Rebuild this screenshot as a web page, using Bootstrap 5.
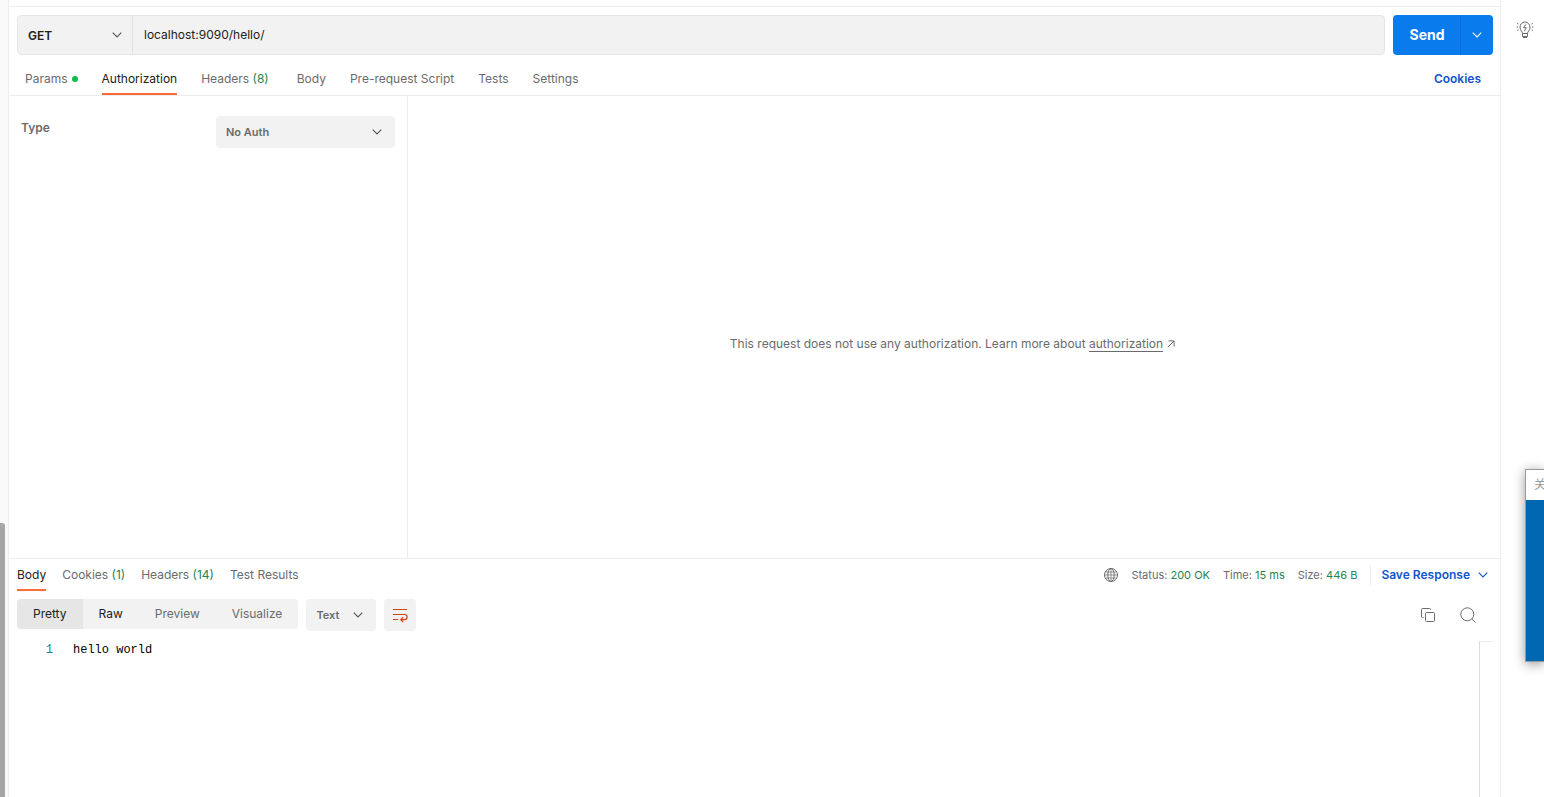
<!DOCTYPE html>
<html lang="en">
<head>
<meta charset="utf-8">
<meta name="viewport" content="width=device-width, initial-scale=1">
<title>localhost:9090/hello/</title>
<link href="https://cdn.jsdelivr.net/npm/bootstrap@5.3.0/dist/css/bootstrap.min.css" rel="stylesheet">
<style>
  :root {
    --line: #ededed;
    --fill: #f2f2f2;
    --muted: #6b6b6b;
    --ink: #212121;
    --link: #1055cc;
    --ok: #26834f;
    --accent: #ff6c37;
  }
  body { font-family: Inter, "Noto Sans CJK SC", sans-serif; font-size: 12px; line-height: 16px; color: var(--muted); background: #fff; overflow: hidden; }
  svg { display: block; flex: none; fill: none; stroke: currentColor; }
  .gutter { width: 9px; background: #f9f9f9; border-right: 1px solid var(--line); }
  .gutter-thumb { width: 5px; height: 274px; background: #a6a6a6; border-radius: 0 3px 0 0; }
  .rail { width: 44px; border-left: 1px solid var(--line); padding-top: 21px; }
  .top-edge { height: 7px; border-bottom: 1px solid var(--line); }
  .rule-b { border-bottom: 1px solid var(--line); }
  .rule-r { border-right: 1px solid var(--line); }

  .request-form { padding: 8px 7px 0 8px; }
  .url-bar { height: 40px; background: var(--fill); border: 1px solid #e6e6e6; border-radius: 4px; }
  .picker { background-color: var(--fill); background-size: 10px 6px; border: 0; border-radius: 4px; font-size: 11px; font-weight: 600; line-height: 16px; color: var(--muted);
    background-image: url("data:image/svg+xml,%3Csvg xmlns='http://www.w3.org/2000/svg' viewBox='0 0 10 6' fill='none' stroke='%23555' stroke-width='1.1'%3E%3Cpath d='M.7 .7L5 5 9.3 .7'/%3E%3C/svg%3E"); }
  .picker-method { flex: none; width: 114px; font-size: 12px; color: var(--ink); padding: 1px 24px 0 10px; background-position: right 10px center; }
  .picker-auth { width: 179px; height: 32px; padding: 0 24px 0 10px; background-position: right 13px center; }
  .picker-lang { width: 70px; height: 32px; padding: 0 20px 0 10px; background-position: right 13px center; }
  .url-input { font-size: 12px; color: var(--ink); border: 0; border-left: 1px solid #e0e0e0; border-radius: 0; background: none; padding: 0 11px; }
  .send { --bs-btn-bg: #097bed; --bs-btn-border-color: #097bed; --bs-btn-hover-bg: #0a6fd4; --bs-btn-color: #fff; --bs-btn-hover-color: #fff; --bs-btn-border-radius: 4px; border: 0; font-size: 14px; font-weight: 700; line-height: 20px; padding: 0; }
  .send-main { width: 68px; }
  .send-more { width: 33px; border-left: 1px solid #0a6ed6; }

  .tab { color: var(--muted); background: none; border: 0; border-bottom: 2px solid transparent; padding: 2px 0 0; font-size: 12px; line-height: 16px; white-space: nowrap; }
  .tab.active { color: var(--ink); border-color: var(--accent); }
  .request-tabs { height: 40px; }
  .request-tabs .tab { padding-top: 10px; }
  .response-tabs { height: 32px; }
  .count { color: var(--ok); }
  .dot { width: 6px; height: 6px; background: #0cbb52; }
  .act { color: var(--link); font-weight: 600; text-decoration: none; font-size: 12px; line-height: 16px; border: 0; background: none; padding: 0; }
  .cookies { margin-right: 19px; }

  .auth-side { width: 399px; padding: 20px 12px; }
  .type-label { font-weight: 600; padding-top: 4px; }
  .auth-note { padding: 34px 3px 0 0; }
  .learn { color: inherit; text-decoration: none; border-bottom: 1px solid currentColor; }

  .response { height: 238px; }
  .meta { font-size: 11px; gap: 13px; }
  .save { border-left: 1px solid var(--line); height: 20px; padding-left: 10px; }
  .views { background: var(--fill); border-radius: 4px; height: 30px; overflow: hidden; }
  .views button { border: 0; background: none; padding: 0 16px; color: var(--muted); font-size: 12px; }
  .views .dark { color: var(--ink); }
  .views .active { background: #e6e6e6; }
  .wrap-btn { width: 32px; height: 32px; border: 0; border-radius: 4px; background: var(--fill); color: #d2430f; }
  .tool { border: 0; background: none; padding: 0; color: var(--muted); }
  .editor { padding: 10px 7px 0 0; }
  .code { font-family: "Liberation Mono", monospace; font-size: 12px; line-height: 18px; color: #000; }
  .line-no { width: 44px; color: #237893; text-align: right; }
  .minimap { width: 14px; border-left: 1px solid #dcdcdc; border-top: 1px solid var(--line); }

  .peek { position: fixed; right: 0; bottom: 135px; width: 19px; height: 193px; border: 1px solid #999; border-right: 0; background: #0067b3; box-shadow: 0 2px 12px rgba(0,0,0,.4); overflow: hidden; }
  .peek-title { height: 30px; background: #fff; color: #999; padding: 6px 0 0 8px; white-space: nowrap; line-height: 18px; }
</style>
</head>
<body class="d-flex vh-100">
  <aside class="gutter d-flex flex-column justify-content-end flex-shrink-0"><div class="gutter-thumb"></div></aside>

  <main class="d-flex flex-column flex-grow-1">
    <div class="top-edge"></div>

    <form class="request-form d-flex gap-2" onsubmit="return false">
      <div class="url-bar d-flex flex-grow-1">
        <select class="form-select picker picker-method" aria-label="Method"><option>GET</option><option>POST</option></select>
        <input class="form-control url-input" type="text" aria-label="Request URL" value="localhost:9090/hello/">
      </div>
      <div class="btn-group">
        <button class="btn send send-main" type="submit">Send</button>
        <button class="btn send send-more d-flex align-items-center justify-content-center" type="button" aria-label="Send options"><svg width="10" height="6"><path d="M.7 .7L5 5 9.3 .7" stroke-width="1.1"/></svg></button>
      </div>
    </form>

    <div class="rule-b d-flex justify-content-between ps-3">
      <div class="request-tabs d-flex gap-4" role="tablist">
        <button class="tab d-flex align-items-center" role="tab">Params <span class="dot rounded-circle ms-1"></span></button>
        <button class="tab active" role="tab">Authorization</button>
        <button class="tab" role="tab">Headers <span class="count">(8)</span></button>
        <button class="tab ms-1" role="tab">Body</button>
        <button class="tab" role="tab">Pre-request Script</button>
        <button class="tab" role="tab">Tests</button>
        <button class="tab" role="tab">Settings</button>
      </div>
      <a class="act cookies align-self-center pt-2" href="#">Cookies</a>
    </div>

    <section class="d-flex flex-grow-1 rule-b">
      <div class="auth-side rule-r d-flex justify-content-between align-items-start flex-shrink-0">
        <label class="type-label" for="auth">Type</label>
        <select id="auth" class="form-select picker picker-auth"><option>No Auth</option><option>Basic Auth</option></select>
      </div>
      <div class="flex-grow-1 d-flex align-items-center justify-content-center">
        <div class="auth-note d-flex align-items-center">
          <span>This request does not use any authorization. Learn more about <a class="learn" href="#">authorization</a></span>
          <svg class="ms-1" width="8" height="8"><path d="M.8 7.2L7 1M1.5 .9H7.1V6.5"/></svg>
        </div>
      </div>
    </section>

    <section class="response d-flex flex-column flex-shrink-0">
      <div class="d-flex justify-content-between px-2">
        <div class="response-tabs d-flex gap-3" role="tablist">
          <button class="tab active" role="tab">Body</button>
          <button class="tab" role="tab">Cookies <span class="count">(1)</span></button>
          <button class="tab" role="tab">Headers <span class="count">(14)</span></button>
          <button class="tab" role="tab">Test Results</button>
        </div>
        <div class="d-flex align-items-center meta me-1">
          <svg width="14" height="14" viewBox="0 0 14 14"><circle cx="7" cy="7" r="6.5"/><ellipse cx="7" cy="7" rx="3.2" ry="6.5"/><path d="M1.5 4H12.5M1.5 10H12.500M.5 7H13.5M7 .5V13.5" stroke-width=".7"/></svg>
          <span>Status: <span class="count">200 OK</span></span>
          <span>Time: <span class="count">15 ms</span></span>
          <span>Size: <span class="count">446 B</span></span>
          <div class="save d-flex align-items-center"><button class="act d-flex align-items-center gap-2" type="button">Save Response <svg width="10" height="6"><path d="M.7 .7L5 5 9.3 .7" stroke-width="1.1"/></svg></button></div>
        </div>
      </div>

      <div class="d-flex gap-2 px-2 pt-2">
        <div class="views d-flex">
          <button class="active dark">Pretty</button><button class="dark">Raw</button><button>Preview</button><button>Visualize</button>
        </div>
        <select class="form-select picker picker-lang" aria-label="Format"><option>Text</option><option>JSON</option></select>
        <button class="wrap-btn d-flex align-items-center justify-content-center" aria-label="Wrap lines"><svg width="16" height="16" viewBox="0 0 16 16"><path d="M1 2.5H15M1 7.5H12.5A2.6 2.6 0 0 1 12.5 12.7H9M1 12.5H6.2M11.2 10.2L8.7 12.7 11.2 15.2" stroke-width="1.2"/></svg></button>
        <div class="d-flex align-items-center gap-4 ms-auto pe-3 me-0">
          <button class="tool" aria-label="Copy"><svg width="16" height="16" viewBox="0 0 16 16"><path d="M3.5 10.5H2.5A1 1 0 0 1 1.5 9.5V2.5A1 1 0 0 1 2.5 1.5H9.5A1 1 0 0 1 10.5 2.5V3"/><rect x="5.5" y="5.5" width="9" height="9" rx="1"/></svg></button>
          <button class="tool" aria-label="Search"><svg width="16" height="16" viewBox="0 0 16 16"><circle cx="7.3" cy="7.3" r="6.5"/><path d="M12 12L15.5 15.5"/></svg></button>
        </div>
      </div>

      <div class="editor d-flex flex-grow-1">
        <div class="code d-flex flex-grow-1"><span class="line-no">1</span><pre class="code m-0 ps-3 ms-1 overflow-visible">hello world</pre></div>
        <div class="minimap"></div>
      </div>
    </section>
  </main>

  <aside class="rail d-flex justify-content-center align-items-start flex-shrink-0">
    <svg class="ms-1" width="18" height="18" viewBox="0 0 18 18" color="#6b6b6b"><path d="M6.5 12.5C6.5 10.5 4 9.8 4 6A5 5 0 0 1 14 6C14 9.800 11.5 10.5 11.5 12.5ZM6.5 12.5V15.5H11.5V12.5M7 16.5H11M9.800 3.300L7.500 6.700H10.300L8.300 10.200M1.200 2.500L2.500 3M.6 6H2M1.200 9.500L2.500 9M16.800 2.500L15.500 3M17.400 6H16M16.800 9.500L15.500 9"/></svg>
  </aside>

  <div class="peek"><div class="peek-title">关</div></div>
<script src="https://cdn.jsdelivr.net/npm/bootstrap@5.3.0/dist/js/bootstrap.bundle.min.js"></script>
</body>
</html>
